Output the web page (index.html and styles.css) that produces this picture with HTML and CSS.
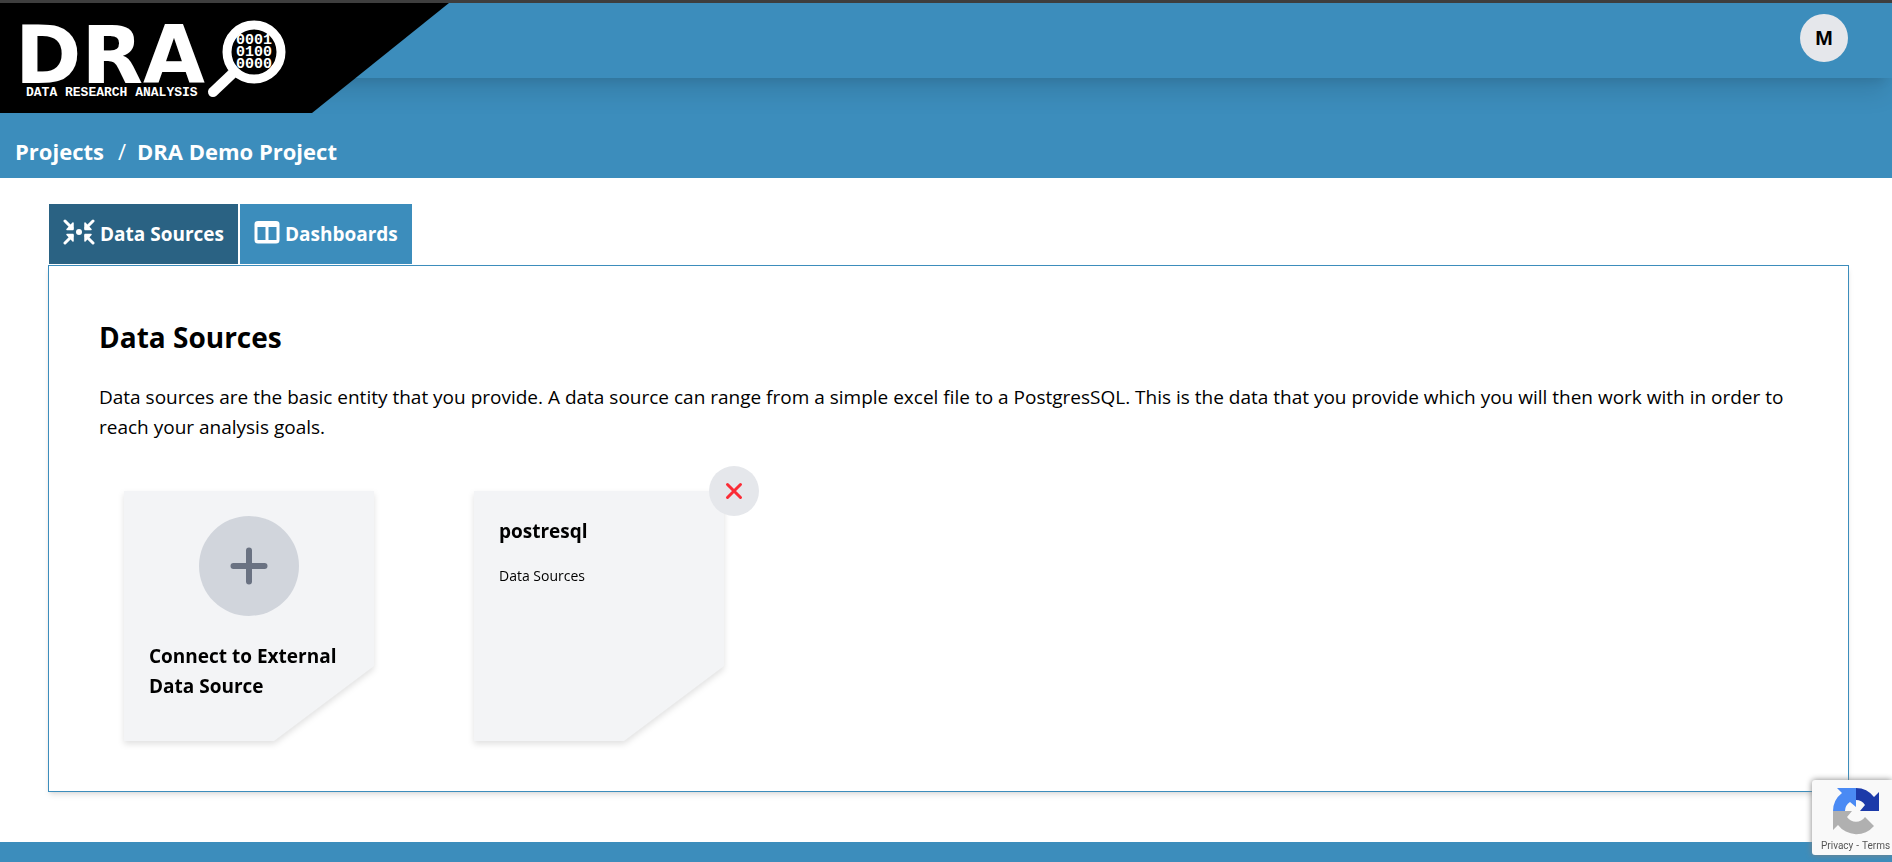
FILE: index.html
```html
<!DOCTYPE html>
<html lang="en">
<head>
<meta charset="utf-8">
<title>DRA Demo Project</title>
<link rel="stylesheet" href="styles.css">
</head>
<body>
<header class="topbar">
  <a class="brand" href="#" aria-label="Data Research Analysis">
    <svg class="logo" width="300" height="110" viewBox="0 0 300 110" fill="#fff">
      <text class="logo-name" x="15" y="80">DRA</text>
      <text class="logo-tag" x="26" y="93">DATA RESEARCH ANALYSIS</text>
      <clipPath id="lens"><circle cx="254" cy="49" r="23"/></clipPath>
      <g class="logo-bits" clip-path="url(#lens)">
        <text x="236" y="41">0001</text>
        <text x="236" y="53">0100</text>
        <text x="236" y="65">0000</text>
      </g>
      <circle cx="254" cy="49" r="27" fill="none" stroke="#fff" stroke-width="9"/>
      <path d="M232 71L213 89" stroke="#fff" stroke-width="10" stroke-linecap="round"/>
    </svg>
  </a>
  <button class="avatar" type="button">M</button>
</header>
<nav class="crumbs" aria-label="Breadcrumb">
  <a href="#">Projects</a><span class="slash">/</span><a href="#">DRA Demo Project</a>
</nav>
<main class="main">
  <div class="tabs">
    <button class="tab tab-active" type="button">
      <svg width="32" height="26" viewBox="0 0 32 26" fill="none" stroke="#fff" stroke-width="3" stroke-linecap="round" stroke-linejoin="round">
        <path d="M2 2L9 9M30 2L23 9M2 24L9 17M30 24L23 17"/>
        <path d="M10 4V10.500H4ZM22 4V10.500H28ZM10 22V15.500H4ZM22 22V15.500H28Z" fill="#fff" stroke-width="1.500"/>
        <circle cx="16" cy="13" r="3" fill="#fff" stroke="none"/>
      </svg>
      Data Sources
    </button>
    <button class="tab" type="button">
      <svg width="26" height="26" viewBox="0 0 26 26" fill="#fff" fill-rule="evenodd">
        <path d="M4 2H22Q25.500 2 25.500 5V21Q25.500 24.500 22 24.500H4Q.5 24.500 .5 21V5Q.5 2 4 2ZM3.500 8V21H11.500V8ZM14.500 8V21H22.500V8Z"/>
      </svg>
      Dashboards
    </button>
  </div>
  <section class="panel">
    <h1>Data Sources</h1>
    <p class="intro">Data sources are the basic entity that you provide. A data source can range from a simple excel file to a PostgresSQL. This is the data that you provide which you will then work with in order to reach your analysis goals.</p>
    <div class="cards">
      <div class="card-wrap">
        <div class="card-shadow">
          <a class="card" href="#">
            <span class="plus">
              <svg width="40" height="40" viewBox="0 0 40 40" stroke="#6a7282" stroke-width="6" stroke-linecap="round"><path d="M20 4.500V35.500M4.500 20H35.500"/></svg>
            </span>
            <span class="card-title">Connect to External Data Source</span>
          </a>
        </div>
      </div>
      <div class="card-wrap">
        <div class="card-shadow">
          <a class="card" href="#">
            <span class="card-title">postresql</span>
            <span class="card-kind">Data Sources</span>
          </a>
        </div>
        <button class="remove" type="button" aria-label="Remove postresql">
          <svg width="18" height="18" viewBox="0 0 18 18" stroke="#fb2c36" stroke-width="3" stroke-linecap="round"><path d="M2.500 2.500L15.500 15.500M15.500 2.500L2.500 15.500"/></svg>
        </button>
      </div>
    </div>
  </section>
</main>
<footer class="footer"></footer>
<aside class="captcha">
  <svg width="48" height="48" viewBox="0 0 48 48">
    <path fill="#1c3aa9" d="M47 24V5L42 10A23 23 0 0 0 24 1V13A11 11 0 0 1 33 18L28 24Z"/>
    <path fill="#4a8af4" d="M24 1H5L10 6A23 23 0 0 0 1 24H13A11 11 0 0 1 18 15L24 20Z"/>
    <path fill="#b0b0b0" d="M1 24V43L6 38A23 23 0 0 0 42 39L33 30A11 11 0 0 1 15 30L20 24Z"/>
  </svg>
  <div class="captcha-links"><a href="#">Privacy</a><span>-</span><a href="#">Terms</a></div>
</aside>
</body>
</html>
```
FILE: styles.css
```css
* { box-sizing: border-box; }
body {
  margin: 0;
  min-height: 100vh;
  display: flex;
  flex-direction: column;
  border-top: 3px solid #3e3e3e;
  background: #fff;
  color: #000;
  font-family: "Segoe UI", "Open Sans", sans-serif;
  font-size: 19px;
  line-height: 30px;
}
a { color: inherit; text-decoration: none; }
button { border: 0; padding: 0; font: inherit; color: inherit; cursor: pointer; }
svg { display: block; flex: none; }

.topbar {
  position: relative;
  display: flex;
  justify-content: space-between;
  align-items: flex-start;
  height: 75px;
  padding-right: 44px;
  background: #3c8dbc;
  box-shadow: 0 20px 25px -5px rgba(0, 0, 0, .1), 0 8px 10px -6px rgba(0, 0, 0, .1);
}
.brand {
  width: 449px;
  height: 110px;
  background: #000;
  clip-path: polygon(0 0, 100% 0, 312px 100%, 0 100%);
}
.logo-name { font: bold 80px "DejaVu Sans", sans-serif; }
.logo-tag { font: bold 13px "Liberation Mono", monospace; }
.logo-bits { font: bold 15px "Liberation Mono", monospace; }
.avatar {
  width: 48px;
  height: 48px;
  margin-top: 11px;
  border-radius: 50%;
  background: #e5e7eb;
  font: bold 21px/48px "Liberation Sans", sans-serif;
}

.crumbs {
  display: flex;
  height: 100px;
  padding: 58px 15px 0;
  background: #3c8dbc;
  color: #fff;
  font-size: 22px;
  font-weight: 700;
}
.slash { margin: 0 11px 0 14px; font-weight: 400; }

.main { flex: 1; padding: 26px 43px 50px 48px; }
.tabs { display: flex; gap: 2px; padding: 0 1px 1px; }
.tab {
  display: flex;
  align-items: center;
  gap: 5px;
  height: 60px;
  padding: 0 14px;
  background: #3c8dbc;
  color: #fff;
  font-weight: 700;
}
.tab svg { margin-bottom: 4px; }
.tab-active { background: #2a6283; }

.panel {
  padding: 50px;
  border: 1px solid #3c8dbc;
  box-shadow: 0 4px 6px -1px rgba(0, 0, 0, .1), 0 2px 4px -2px rgba(0, 0, 0, .1);
}
h1 { margin: 0 0 24px; font-size: 28px; line-height: 42px; }
.intro { margin: 0; }
.cards { display: flex; flex-wrap: wrap; gap: 100px; padding: 49px 25px 0; }
.card-wrap { position: relative; width: 250px; }
.card-shadow { filter: drop-shadow(0 3px 3px rgba(0, 0, 0, .12)); }
.card {
  display: flex;
  flex-direction: column;
  min-height: 250px;
  padding: 25px;
  background: #f3f4f6;
  clip-path: polygon(0 0, 100% 0, 100% 70%, 60% 100%, 0 100%);
}
.plus {
  display: grid;
  place-items: center;
  align-self: center;
  width: 100px;
  height: 100px;
  margin-bottom: 25px;
  border-radius: 50%;
  background: #d1d5dc;
}
.card-title { font-weight: 700; }
.card-kind { margin-top: 18px; font-size: 14px; line-height: 24px; }
.remove {
  position: absolute;
  top: -25px;
  right: -35px;
  display: grid;
  place-items: center;
  width: 50px;
  height: 50px;
  border-radius: 50%;
  background: #e5e7eb;
}

.footer { height: 20px; background: #3c8dbc; }
.captcha {
  position: fixed;
  right: 0;
  bottom: 7px;
  width: 80px;
  height: 75px;
  padding: 7px 0 0 9px;
  border-radius: 3px 0 0 3px;
  background: #f9f9f9;
  box-shadow: 0 0 6px #808080;
  color: #555;
  font: 10px/14px Roboto, sans-serif;
}
.captcha svg { margin-left: 11px; }
.captcha-links { display: flex; gap: 3px; margin-top: 4px; }
```
